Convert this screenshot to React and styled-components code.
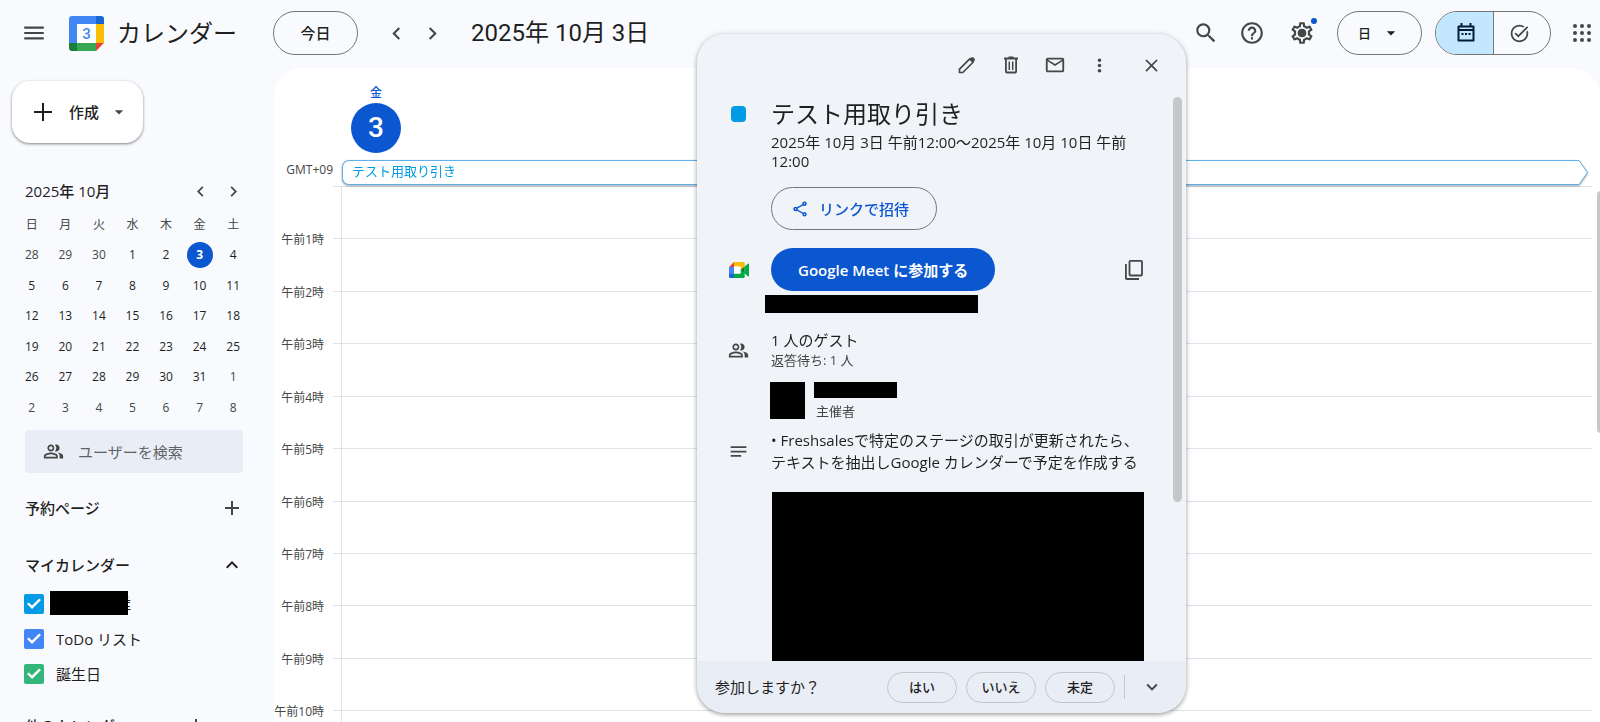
import styled, { createGlobalStyle } from "styled-components";
import {
  MdMenu,
  MdSearch,
  MdHelpOutline,
  MdChevronLeft,
  MdChevronRight,
  MdExpandLess,
  MdExpandMore,
  MdArrowDropDown,
  MdAdd,
  MdTaskAlt,
  MdOutlinePeopleAlt,
  MdOutlineSettings,
  MdMailOutline,
  MdMoreVert,
  MdClose,
  MdOutlineShare,
  MdNotes,
} from "react-icons/md";

const GlobalStyle = createGlobalStyle`
  :root {
    --page: #f8fafd;
    --ink: #1f1f1f;
    --muted: #444746;
    --blue: #0b57d0;
    --event: #039be5;
    --line: #dde3ea;
    --outline: #747775;
  }
  * {
    box-sizing: border-box;
  }
  body {
    margin: 0;
    overflow: hidden;
    background: var(--page);
    color: var(--ink);
    font-family: "Open Sans", "Noto Sans CJK JP", sans-serif;
    font-size: 15px;
    line-height: 20px;
  }
  button, input, select {
    font: inherit;
    color: inherit;
  }
  button {
    padding: 0;
    border: none;
    background: none;
    cursor: pointer;
  }
  svg {
    display: block;
    flex: none;
  }
`;

const Page = styled.div`
  display: flex;
  flex-direction: column;
  height: 100vh;
`;

/* ---------- top bar ---------- */

const TopBar = styled.header`
  display: flex;
  align-items: center;
  flex: none;
  height: 68px;
  padding-bottom: 2px;
`;

const Brand = styled.div`
  display: flex;
  align-items: center;
  flex: none;
  width: 273px;
  padding-left: 12px;
`;

const BrandName = styled.span`
  margin-left: 13px;
  font-size: 24px;
  line-height: 32px;
`;

const IconButton = styled.button`
  display: flex;
  align-items: center;
  justify-content: center;
  flex: none;
  width: ${(p) => p.$w || 36}px;
  height: 36px;
  color: ${(p) => p.$color || "var(--muted)"};
`;

const LogoLink = styled.a`
  margin-left: 13px;
  font-family: Roboto, sans-serif;
`;

const PillButton = styled.button`
  width: 85px;
  height: 44px;
  border: 1px solid var(--outline);
  border-radius: 22px;
  font-weight: 500;
`;

const DateNav = styled.div`
  display: flex;
  margin: 0 21px 0 20px;
`;

const CurrentDate = styled.h1`
  margin: 0;
  font-family: Roboto, "Noto Sans CJK JP", sans-serif;
  font-size: 24px;
  font-weight: 400;
  line-height: 32px;
`;

const Tools = styled.div`
  display: flex;
  align-items: center;
  margin-left: auto;
`;

const SettingsButton = styled(IconButton)`
  position: relative;
  margin: 0 12px 0 4px;

  &::after {
    content: "";
    position: absolute;
    top: 3px;
    right: 8px;
    width: 6px;
    height: 6px;
    border-radius: 50%;
    background: var(--blue);
  }
`;

const ViewPicker = styled.label`
  position: relative;

  select {
    appearance: none;
    width: 85px;
    height: 44px;
    padding: 0 20px;
    border: 1px solid var(--outline);
    border-radius: 22px;
    background: transparent;
    font-size: 13px;
    font-weight: 500;
  }
  svg {
    position: absolute;
    top: 12px;
    right: 21px;
    pointer-events: none;
  }
`;

const Toggle = styled.div`
  display: flex;
  width: 116px;
  height: 44px;
  margin: 0 13px;
  border: 1px solid var(--outline);
  border-radius: 22px;
  overflow: hidden;
`;

const ToggleButton = styled.button`
  display: flex;
  flex: 1;
  align-items: center;
  justify-content: center;
  color: ${(p) => (p.$active ? "#001d35" : "var(--muted)")};
  background: ${(p) => (p.$active ? "#c2e7ff" : "transparent")};

  &:first-child {
    padding-left: 4px;
  }
  &:last-child {
    padding-right: 4px;
    border-left: 1px solid var(--outline);
  }
`;

/* ---------- sidebar ---------- */

const Columns = styled.div`
  display: flex;
  flex: 1;
  min-height: 0;
`;

const Sidebar = styled.aside`
  flex: none;
  width: 274px;
  overflow: hidden auto;
  scrollbar-width: none;
`;

const CreateButton = styled.button`
  display: flex;
  align-items: center;
  width: 131px;
  height: 62px;
  margin: 13px 0 0 12px;
  padding-left: 18px;
  border-radius: 18px;
  background: #fff;
  box-shadow: 0 1px 3px rgba(60, 64, 67, 0.5), 0 1px 2px rgba(60, 64, 67, 0.2);
  font-weight: 500;

  span {
    margin: 0 10px 0 13px;
  }
`;

const SideHead = styled.div`
  display: flex;
  align-items: center;
  height: 36px;
  padding: 0 24px 0 25px;
  margin-top: ${(p) => p.$gap}px;

  h2 {
    flex: 1;
    margin: 0;
    font-size: 15px;
    font-weight: 500;
  }
`;

const MonthHead = styled(SideHead)`
  ${IconButton} {
    width: 33px;
  }
`;

const MonthTable = styled.table`
  width: 235px;
  height: 213px;
  margin: 1px 0 0 15px;
  border-collapse: collapse;
  table-layout: fixed;
  font-size: 12px;
  text-align: center;

  th,
  td {
    height: 30px;
    padding: 0;
    font-weight: 400;
    color: var(--muted);
  }
`;

const Day = styled.span`
  display: block;
  width: 26px;
  margin: 0 auto;
  border-radius: 50%;
  line-height: 26px;
  font-weight: ${(p) => (p.$today ? 700 : p.$out ? 400 : 500)};
  color: ${(p) => (p.$today ? "#fff" : p.$out ? "var(--muted)" : "var(--ink)")};
  background: ${(p) => (p.$today ? "var(--blue)" : "none")};
`;

const PeopleSearch = styled.label`
  display: flex;
  align-items: center;
  height: 43px;
  margin: 7px 31px 0 25px;
  padding-left: 18px;
  border-radius: 4px;
  background: #e9eef6;
  color: var(--muted);

  input {
    flex: 1;
    min-width: 0;
    margin-left: 14px;
    padding: 0;
    border: none;
    background: none;
    outline: none;
  }
  input::placeholder {
    color: #5f6368;
    opacity: 1;
  }
`;

const CalendarRow = styled.label`
  display: flex;
  align-items: center;
  height: 35px;
  padding-left: 24px;

  ${SideHead} + & {
    margin-top: 3px;
  }

  input {
    appearance: none;
    display: grid;
    place-items: center;
    width: 20px;
    height: 20px;
    margin: 0 12px 0 0;
    border-radius: 2px;
    background: ${(p) => p.$color};
  }
  input::before {
    content: "";
    width: 14px;
    height: 11px;
    background: #fff;
    clip-path: polygon(0 55%, 12% 40%, 36% 68%, 87% 4%, 100% 18%, 36% 100%);
  }
`;

const Masked = styled.span`
  display: flex;
  align-items: center;
  height: 24px;
  margin: -2px 0 0 -6px;

  i {
    position: relative;
    width: 78px;
    height: 24px;
    margin-right: -12px;
    background: #000;
  }
`;

/* ---------- day view ---------- */

const DayView = styled.main`
  display: flex;
  flex-direction: column;
  flex: 1;
  min-width: 0;
  overflow: hidden;
  border-radius: 28px 28px 0 0;
  background: #fff;
`;

const DayHead = styled.div`
  display: flex;
  flex-direction: column;
  align-items: center;
  flex: none;
  width: 50px;
  margin-left: 77px;
  padding-top: 15px;
  color: var(--blue);
  font-size: 12px;
  font-weight: 500;
  line-height: 20px;

  strong {
    width: 50px;
    border-radius: 50%;
    background: var(--blue);
    color: #fff;
    font-family: Roboto, sans-serif;
    font-size: 28px;
    font-weight: 500;
    line-height: 50px;
    text-align: center;
  }
`;

const AllDayRow = styled.div`
  display: flex;
  flex: none;
  height: 33px;
  padding: 7px 12px 0 0;
`;

const Zone = styled.span`
  width: 68px;
  padding-right: 9px;
  color: var(--muted);
  font-size: 12px;
  line-height: 20px;
  text-align: right;
`;

const EventBar = styled.button`
  display: flex;
  flex: 1;
  height: 25px;
  filter: drop-shadow(0 1px 1px rgba(60, 64, 67, 0.5));

  span {
    flex: 1;
    height: 25px;
    padding-left: 9px;
    border: 1px solid #5fb0ea;
    border-right: none;
    border-radius: 7px 0 0 7px;
    background: #fff;
    color: var(--event);
    font-size: 13px;
    line-height: 20px;
    text-align: left;
  }
`;

const Scroller = styled.div`
  display: flex;
  flex: 1;
  min-height: 0;
`;

const HoursPane = styled.div`
  flex: 1;
  overflow-y: auto;
  scrollbar-width: none;
`;

const Hours = styled.ol`
  display: grid;
  grid-template-rows: repeat(24, 1fr);
  height: 1258px;
  margin: 0;
  padding: 0;
  list-style: none;
`;

const Hour = styled.li`
  display: flex;

  span {
    width: 59px;
    padding-right: 9px;
    color: var(--muted);
    font-size: 12px;
    line-height: 20px;
    margin-top: -8px;
    text-align: right;
    white-space: nowrap;
    direction: rtl;
  }
  i {
    width: 8px;
    border-top: 1px solid var(--line);
  }
  div {
    flex: 1;
    border-top: 1px solid var(--line);
    border-left: 1px solid var(--line);
  }
`;

const ScrollTrack = styled.div`
  width: 8px;
  padding: 5px 0 0 5px;

  div {
    width: 8px;
    height: 242px;
    border-radius: 4px;
    background: #c7c7c7;
  }
`;

/* ---------- event card ---------- */

const Card = styled.section`
  position: fixed;
  top: 34px;
  right: 414px;
  bottom: 9px;
  display: flex;
  flex-direction: column;
  width: 489px;
  overflow: hidden;
  border-radius: 28px;
  background: #f0f4f9;
  box-shadow: 0 2px 4px rgba(0, 0, 0, 0.3), 0 0 6px rgba(0, 0, 0, 0.12);
`;

const CardTools = styled.div`
  display: flex;
  align-items: center;
  justify-content: flex-end;
  flex: none;
  height: 62px;
  margin-bottom: 1px;
  padding-right: 13px;

  button:last-child {
    margin-left: 8px;
  }
`;

const CardScroll = styled.div`
  display: flex;
  flex: 1;
  min-height: 0;
`;

const CardBody = styled.div`
  flex: 1;
  min-width: 0;
  overflow: hidden;
`;

const Thumb = styled.div`
  width: 9px;
  height: 405px;
  margin-right: 4px;
  border-radius: 5px;
  background: #c7c7c7;
`;

const CardRow = styled.div`
  display: flex;
  align-items: ${(p) => p.$align || "center"};
  margin-top: ${(p) => p.$gap || 0}px;
  padding-right: 29px;
`;

const Lead = styled.div`
  display: flex;
  justify-content: center;
  flex: none;
  width: 74px;
  padding-left: 9px;
  color: var(--muted);
`;

const Swatch = styled.i`
  width: 15px;
  height: 16px;
  margin-top: 9px;
  border-radius: 4px;
  background: var(--event);
`;

const EventTitle = styled.h2`
  margin: 0 0 2px;
  font-size: 24px;
  font-weight: 400;
  line-height: 34px;
`;

const Text = styled.p`
  margin: 0;
  line-height: ${(p) => p.$lh || 20}px;
`;

const Small = styled.p`
  margin: 0;
  color: var(--muted);
  font-size: 13px;
  line-height: 20px;
`;

const InviteButton = styled.button`
  display: flex;
  align-items: center;
  gap: 10px;
  height: 43px;
  margin-top: 16px;
  padding: 0 27px 0 19px;
  border: 1px solid var(--outline);
  border-radius: 22px;
  color: var(--blue);
  font-weight: 500;
`;

const MeetButton = styled.button`
  height: 43px;
  padding: 0 27px;
  border-radius: 22px;
  background: var(--blue);
  color: #fff;
  font-weight: 600;
`;

const CopyButton = styled(IconButton)`
  width: 20px;
  margin-left: auto;
`;

const Block = styled.div`
  width: ${(p) => p.$w}px;
  height: ${(p) => p.$h}px;
  background: #000;
`;

const MeetLink = styled(Block)`
  margin: 4px 0 0 68px;
`;

const Guest = styled.div`
  display: flex;
  gap: 9px;
  margin: 12px 0 0 73px;

  p {
    padding: 3px 0 0 2px;
  }
`;

const HiddenNote = styled.div`
  height: 169px;
  margin: 19px 29px 0 75px;
  background: #000;
`;

const CardFooter = styled.footer`
  display: flex;
  align-items: center;
  flex: none;
  gap: 9px;
  height: 52px;
  padding: 0 16px 0 18px;
  background: #e9eef6;

  > span {
    flex: 1;
  }
`;

const Answer = styled.button`
  width: 70px;
  height: 31px;
  border: 1px solid #c4c7c5;
  border-radius: 16px;
  font-size: 13px;
  font-weight: 500;
`;

const Divider = styled.i`
  width: 1px;
  height: 24px;
  background: #c4c7c5;
`;

/* ---------- drawings ---------- */

const CalendarLogo = () => (
  <svg width="35" height="35" viewBox="0 0 35 35">
    <path d="M3 0H27V8H8V27H0V3A3 3 0 0 1 3 0Z" fill="#4285f4" />
    <path d="M27 0H32A3 3 0 0 1 35 3V8H27Z" fill="#1967d2" />
    <path d="M27 8H35V27H27Z" fill="#fbbc04" />
    <path d="M8 27H27V35H8Z" fill="#34a853" />
    <path d="M0 27H8V35H3A3 3 0 0 1 0 32Z" fill="#188038" />
    <path d="M27 27H35L27 35Z" fill="#ea4335" />
    <path d="M8 8H27V27H8Z" fill="#fff" />
    <text x="17.5" y="23" textAnchor="middle" fontSize="15" fontWeight="500" fill="#4285f4">
      3
    </text>
  </svg>
);

const GearIcon = () => (
  <svg width="26" height="26" viewBox="0 0 24 24">
    <MdOutlineSettings size={24} />
    <circle cx="12" cy="12" r="3.8" fill="currentColor" />
  </svg>
);

const CalendarIcon = () => (
  <svg width="20" height="20" viewBox="0 0 20 20" fill="none" stroke="currentColor" strokeWidth="2">
    <path d="M2.5 3.5H17.5V17.5H2.5Z" strokeLinejoin="round" />
    <path d="M2 7H18M5.5 0V3M14.5 0V3" />
    <path d="M5.5 11H7.5M9 11H11M12.5 11H14.5" />
  </svg>
);

const AppsIcon = () => (
  <svg width="18" height="18" viewBox="0 0 18 18" fill="currentColor">
    {[2, 9, 16].map((y) => [2, 9, 16].map((x) => <circle key={`${x}-${y}`} cx={x} cy={y} r="2" />))}
  </svg>
);

const PencilIcon = () => (
  <svg width="18" height="18" viewBox="0 0 18 18" fill="none" stroke="currentColor" strokeWidth="1.7">
    <path d="M1.5 16.5V13.2L12 2.700L15.300 6L4.800 16.500Z" strokeLinejoin="round" />
    <path d="M11.200 3.500L13.300 1.400Q14.300 0.600 15.300 1.400L16.600 2.700Q17.400 3.700 16.600 4.700L14.500 6.800Z" fill="currentColor" stroke="none" />
  </svg>
);

const TrashIcon = () => (
  <svg width="16" height="18" viewBox="0 0 16 18" fill="none" stroke="currentColor" strokeWidth="1.8">
    <path d="M1 2.5H15M5.5 1.5H10.5" />
    <path d="M2.9 3V15.5A1 1 0 0 0 3.9 16.5H12.1A1 1 0 0 0 13.1 15.5V3" />
    <path d="M6.3 5.5V14M9.7 5.5V14" strokeWidth="1.5" />
  </svg>
);

const CopyIcon = () => (
  <svg width="18" height="20" viewBox="0 0 18 20" fill="none" stroke="currentColor" strokeWidth="1.8">
    <path d="M5.5 0.9H16A1 1 0 0 1 17 1.9V14.5A1 1 0 0 1 16 15.5H5.5A1 1 0 0 1 4.5 14.5V1.9A1 1 0 0 1 5.5 0.9Z" />
    <path d="M0.9 4V18A1 1 0 0 0 1.9 19H14" />
  </svg>
);

const PlusIcon = () => (
  <svg width="26" height="26" viewBox="0 0 26 26" stroke="currentColor" strokeWidth="2">
    <path d="M4 13H22M13 4V22" />
  </svg>
);

const MeetIcon = () => (
  <svg width="20" height="16" viewBox="0 0 20 16">
    <path d="M0 5L5 0V5Z" fill="#ea4335" />
    <path d="M5 0H14.5A1.2 1.2 0 0 1 15.7 1.2V5L11.5 8V4.5H5Z" fill="#fbbc04" />
    <path d="M0 5H5V12H0Z" fill="#4285f4" />
    <path d="M0 12H5V16H1.2A1.2 1.2 0 0 1 0 14.8Z" fill="#1967d2" />
    <path d="M5 11.5H11.5V8L15.7 11V14.8A1.2 1.2 0 0 1 14.5 16H5Z" fill="#00ac47" />
    <path d="M5 4.5H11.5V11.5H5Z" fill="#fff" />
    <path d="M11.5 8L15.7 4.6V11.4Z" fill="#00832d" />
    <path d="M15.7 4.6L18.9 1.8Q20 1.2 20 2.3V13.7Q20 14.8 18.9 14.2L15.7 11.4Z" fill="#00ac47" />
  </svg>
);

const ArrowEnd = () => (
  <svg width="10" height="25" viewBox="0 0 10 25" fill="#fff" stroke="#5fb0ea">
    <path d="M0 0.5H1L9.5 12.5L1 24.5H0" />
  </svg>
);

/* ---------- data ---------- */

const weekdays = ["日", "月", "火", "水", "木", "金", "土"];
// six weeks from September 28
const days = [28, 29, 30, ...Array.from({ length: 31 }, (_, i) => i + 1), 1, 2, 3, 4, 5, 6, 7, 8];
const weeks = Array.from({ length: 6 }, (_, w) => days.slice(w * 7, w * 7 + 7));
const hours = Array.from({ length: 24 }, (_, h) => h);
const hourLabel = (h) => (h === 0 ? "" : h < 12 ? `午前${h}時` : `午後${h - 12}時`);

function MiniCalendar() {
  return (
    <MonthTable>
      <thead>
        <tr>
          {weekdays.map((d) => (
            <th key={d}>{d}</th>
          ))}
        </tr>
      </thead>
      <tbody>
        {weeks.map((week, w) => (
          <tr key={w}>
            {week.map((d, i) => {
              const n = w * 7 + i;
              return (
                <td key={n}>
                  <Day $today={n === 5} $out={n < 3 || n > 33}>
                    {d}
                  </Day>
                </td>
              );
            })}
          </tr>
        ))}
      </tbody>
    </MonthTable>
  );
}

function EventCard() {
  return (
    <Card role="dialog" aria-labelledby="event-title">
      <CardTools>
        <IconButton $w={44} aria-label="編集">
          <PencilIcon />
        </IconButton>
        <IconButton $w={44} aria-label="削除">
          <TrashIcon />
        </IconButton>
        <IconButton $w={44} aria-label="メール">
          <MdMailOutline size={22} />
        </IconButton>
        <IconButton $w={44} aria-label="オプション">
          <MdMoreVert size={21} />
        </IconButton>
        <IconButton $w={44} aria-label="閉じる">
          <MdClose size={21} />
        </IconButton>
      </CardTools>
      <CardScroll>
        <CardBody>
          <CardRow $align="flex-start">
            <Lead>
              <Swatch />
            </Lead>
            <div>
              <EventTitle id="event-title">テスト用取り引き</EventTitle>
              <Text $lh={19}>2025年 10月 3日 午前12:00～2025年 10月 10日 午前12:00</Text>
              <InviteButton>
                <MdOutlineShare size={18} />
                リンクで招待
              </InviteButton>
            </div>
          </CardRow>
          <CardRow $gap={18}>
            <Lead>
              <MeetIcon />
            </Lead>
            <MeetButton>Google Meet に参加する</MeetButton>
            <CopyButton aria-label="コピー">
              <CopyIcon />
            </CopyButton>
          </CardRow>
          <MeetLink $w={213} $h={18} />
          <CardRow $gap={17}>
            <Lead>
              <MdOutlinePeopleAlt size={21} />
            </Lead>
            <div>
              <Text>1 人のゲスト</Text>
              <Small>返答待ち: 1 人</Small>
            </div>
          </CardRow>
          <Guest>
            <Block $w={35} $h={37} />
            <div>
              <Block $w={83} $h={16} />
              <Small>主催者</Small>
            </div>
          </Guest>
          <CardRow $gap={8}>
            <Lead>
              <MdNotes size={21} />
            </Lead>
            <Text $lh={22}>
              • Freshsalesで特定のステージの取引が更新されたら、
              <br />
              テキストを抽出しGoogle カレンダーで予定を作成する
            </Text>
          </CardRow>
          <HiddenNote />
        </CardBody>
        <Thumb />
      </CardScroll>
      <CardFooter>
        <span>参加しますか？</span>
        <Answer>はい</Answer>
        <Answer>いいえ</Answer>
        <Answer>未定</Answer>
        <Divider />
        <IconButton aria-label="その他の返答">
          <MdExpandMore size={22} />
        </IconButton>
      </CardFooter>
    </Card>
  );
}

export default function App() {
  return (
    <Page>
      <GlobalStyle />
      <TopBar>
        <Brand>
          <IconButton $w={44} aria-label="メインメニュー">
            <MdMenu size={26} />
          </IconButton>
          <LogoLink href="#" aria-label="カレンダー">
            <CalendarLogo />
          </LogoLink>
          <BrandName>カレンダー</BrandName>
        </Brand>
        <PillButton>今日</PillButton>
        <DateNav>
          <IconButton aria-label="前の日">
            <MdChevronLeft size={25} />
          </IconButton>
          <IconButton aria-label="次の日">
            <MdChevronRight size={25} />
          </IconButton>
        </DateNav>
        <CurrentDate>2025年 10月 3日</CurrentDate>
        <Tools>
          <IconButton $w={46} aria-label="検索">
            <MdSearch size={26} />
          </IconButton>
          <IconButton $w={46} aria-label="サポート">
            <MdHelpOutline size={26} />
          </IconButton>
          <SettingsButton $w={46} aria-label="設定">
            <GearIcon />
          </SettingsButton>
          <ViewPicker>
            <select aria-label="表示形式" defaultValue="day">
              <option value="day">日</option>
              <option value="week">週</option>
              <option value="month">月</option>
            </select>
            <MdArrowDropDown size={20} />
          </ViewPicker>
          <Toggle>
            <ToggleButton $active aria-label="カレンダー">
              <CalendarIcon />
            </ToggleButton>
            <ToggleButton aria-label="ToDo リスト">
              <MdTaskAlt size={21} />
            </ToggleButton>
          </Toggle>
          <IconButton aria-label="アプリ">
            <AppsIcon />
          </IconButton>
        </Tools>
      </TopBar>
      <Columns>
        <Sidebar>
          <CreateButton>
            <PlusIcon />
            <span>作成</span>
            <MdArrowDropDown size={20} color="#444746" />
          </CreateButton>
          <MonthHead $gap={30}>
            <h2>2025年 10月</h2>
            <IconButton aria-label="前の月">
              <MdChevronLeft size={21} />
            </IconButton>
            <IconButton aria-label="次の月">
              <MdChevronRight size={21} />
            </IconButton>
          </MonthHead>
          <MiniCalendar />
          <PeopleSearch>
            <MdOutlinePeopleAlt size={21} />
            <input type="text" placeholder="ユーザーを検索" />
          </PeopleSearch>
          <SideHead $gap={17}>
            <h2>予約ページ</h2>
            <IconButton aria-label="予約ページを作成">
              <MdAdd size={24} />
            </IconButton>
          </SideHead>
          <SideHead $gap={21}>
            <h2>マイカレンダー</h2>
            <IconButton $color="var(--ink)" aria-label="マイカレンダーを閉じる">
              <MdExpandLess size={24} />
            </IconButton>
          </SideHead>
          <CalendarRow $color="#039be5">
            <input type="checkbox" defaultChecked />
            <Masked>
              <i />唯
            </Masked>
          </CalendarRow>
          <CalendarRow $color="#4285f4">
            <input type="checkbox" defaultChecked />
            ToDo リスト
          </CalendarRow>
          <CalendarRow $color="#33b679">
            <input type="checkbox" defaultChecked />
            誕生日
          </CalendarRow>
          <SideHead $gap={17}>
            <h2>他のカレンダー</h2>
            <IconButton aria-label="他のカレンダーを追加">
              <MdAdd size={24} />
            </IconButton>
            <IconButton aria-label="他のカレンダーを閉じる">
              <MdExpandLess size={24} />
            </IconButton>
          </SideHead>
        </Sidebar>
        <DayView>
          <DayHead>
            金<strong>3</strong>
          </DayHead>
          <AllDayRow>
            <Zone>GMT+09</Zone>
            <EventBar>
              <span>テスト用取り引き</span>
              <ArrowEnd />
            </EventBar>
          </AllDayRow>
          <Scroller>
            <HoursPane>
              <Hours>
                {hours.map((h) => (
                  <Hour key={h}>
                    <span>{hourLabel(h)}</span>
                    <i />
                    <div />
                  </Hour>
                ))}
              </Hours>
            </HoursPane>
            <ScrollTrack>
              <div />
            </ScrollTrack>
          </Scroller>
        </DayView>
      </Columns>
      <EventCard />
    </Page>
  );
}
